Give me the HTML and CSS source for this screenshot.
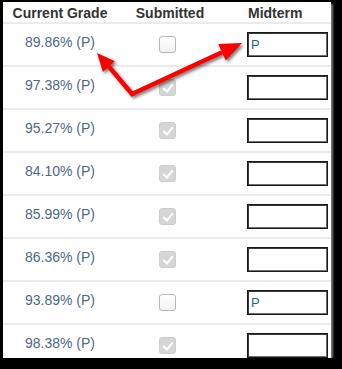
FILE: index.html
```html
<!DOCTYPE html>
<html lang="en">

<head>
    <meta charset="UTF-8">
    <meta name="viewport" content="width=device-width, initial-scale=1.0">
    <title>Grades</title>
    <link rel="stylesheet" href="styles.css">
</head>

<body>
    <div class="sheet">
        <div class="row head">
            <div class="grade">Current Grade</div>
            <div class="sub">Submitted</div>
            <div class="mid">Midterm</div>
        </div>
        <div class="row">
            <div class="grade">89.86% (P)</div>
            <div class="sub"><span class="box"></span></div>
            <div class="mid"><span class="field">P</span></div>
        </div>
        <div class="row">
            <div class="grade">97.38% (P)</div>
            <div class="sub"><span class="box checked"></span></div>
            <div class="mid"><span class="field"></span></div>
        </div>
        <div class="row">
            <div class="grade">95.27% (P)</div>
            <div class="sub"><span class="box checked"></span></div>
            <div class="mid"><span class="field"></span></div>
        </div>
        <div class="row">
            <div class="grade">84.10% (P)</div>
            <div class="sub"><span class="box checked"></span></div>
            <div class="mid"><span class="field"></span></div>
        </div>
        <div class="row">
            <div class="grade">85.99% (P)</div>
            <div class="sub"><span class="box checked"></span></div>
            <div class="mid"><span class="field"></span></div>
        </div>
        <div class="row">
            <div class="grade">86.36% (P)</div>
            <div class="sub"><span class="box checked"></span></div>
            <div class="mid"><span class="field"></span></div>
        </div>
        <div class="row">
            <div class="grade">93.89% (P)</div>
            <div class="sub"><span class="box"></span></div>
            <div class="mid"><span class="field">P</span></div>
        </div>
        <div class="row">
            <div class="grade">98.38% (P)</div>
            <div class="sub"><span class="box checked"></span></div>
            <div class="mid"><span class="field"></span></div>
        </div>
    </div>

    <!-- arrows drawn over the table -->
    <svg class="arrows" width="342" height="369" viewBox="0 0 342 369">
        <polyline points="108.9,66.6 132,94 222,52.2" fill="none" stroke="#ff0000" stroke-width="4.5" stroke-linejoin="miter" />
        <polygon points="97,53 114.9,61.3 102.9,71.9" fill="#ff0000" />
        <polygon points="242,43 225.8,60.4 218.2,44" fill="#ff0000" />
    </svg>
</body>

</html>
```

FILE: styles.css
```css
body {
    margin: 0;
    padding: 0;
    background-color: #000;
    font-family: 'Liberation Sans', Arial, sans-serif;
    font-size: 14px;
}

.sheet {
    width: 328px;
    height: 356px;
    margin: 2px 0 0 3px;
    background-color: #fff;
    overflow: hidden;
    box-shadow: 2px 2px 2px rgba(140, 140, 140, 0.9);
}

.row {
    display: grid;
    grid-template-columns: 114px 104px 1fr;
    align-items: center;
    height: 41px;
    border-bottom: 2px solid #ebebeb;
}

.row.head {
    height: 18px;
    padding-top: 2px;
    line-height: 18px;
    font-weight: bold;
    color: #333;
}

.grade { text-align: center; }

.row .grade {
    color: #4d6886;
    padding-bottom: 5px;
}

.row.head .grade { color: #333; padding-bottom: 0; }

.sub {
    display: flex;
    justify-content: center;
}

.row.head .sub { padding-left: 2px; }

.mid { padding-left: 26px; }

.row.head .mid { padding-left: 27px; }

.box {
    display: block;
    width: 15px;
    height: 15px;
    margin-right: 3px;
    border: 1px solid #b8b8b8;
    border-radius: 3px;
    background: linear-gradient(#fff, #f2f2f2);
}

.box.checked {
    border-color: #cdcdcd;
    background: #d6d6d6;
    position: relative;
}

.box.checked::after {
    content: "";
    position: absolute;
    left: 5px;
    top: 2px;
    width: 4px;
    height: 8px;
    border-right: 2px solid #fff;
    border-bottom: 2px solid #fff;
    transform: rotate(40deg);
}

.field {
    display: block;
    box-sizing: border-box;
    width: 81px;
    height: 25px;
    padding-left: 3px;
    border: 1px solid #1a1a1a;
    box-shadow: inset 1px 1px 0 #3a3a3a, inset -1px -1px 0 #6e6e6e;
    font-size: 13px;
    line-height: 23px;
    color: #2062a8;
}

.arrows {
    position: absolute;
    left: 0;
    top: 0;
    filter: drop-shadow(2px 2px 1.5px rgba(0, 0, 0, 0.5));
}
```
